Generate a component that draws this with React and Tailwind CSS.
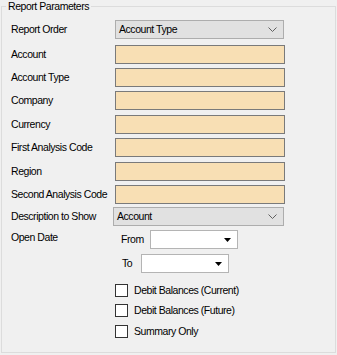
import React from 'react';

const Chevron = () => (
  <svg width="9" height="5" viewBox="0 0 9 5" className="block">
    <path d="M0.5 0.5 L4.5 4.5 L8.5 0.5" stroke="#606060" strokeWidth="1" fill="none" />
  </svg>
);

const Caret = () => (
  <svg width="7" height="4" viewBox="0 0 7 4" className="block">
    <path d="M0 0 H7 L3.5 4 Z" fill="#000" />
  </svg>
);

const Combo = ({ value, className = '' }) => (
  <div className={`h-[19px] border border-[#adadad] bg-[#e1e1e1] flex items-center justify-between pl-[3px] pr-[6px] ${className}`}>
    <span className="leading-none">{value}</span>
    <Chevron />
  </div>
);

const Field = () => (
  <div className="h-[19px] w-[170px] border border-[#7a7a7a] bg-[#f8dfb4]" />
);

const DateBox = ({ className = '' }) => (
  <div className={`h-[19px] w-[88px] border border-[#b4b4b4] bg-white flex items-center justify-end pr-[6px] ${className}`}>
    <Caret />
  </div>
);

const Row = ({ label, mt, children }) => (
  <div className={`flex items-center ${mt}`}>
    <div className="w-[113px] pl-[9px] whitespace-nowrap">{label}</div>
    {children}
  </div>
);

const Check = ({ label, mt }) => (
  <label className={`flex items-center leading-[13px] ${mt}`}>
    <span className="w-[13px] h-[13px] border border-[#333] bg-white" />
    <span className="ml-[6px] whitespace-nowrap">{label}</span>
  </label>
);

export default function App() {
  const fields = [
    ['Account', 'mt-[6px]'],
    ['Account Type', 'mt-[4px]'],
    ['Company', 'mt-[4px]'],
    ['Currency', 'mt-[5px]'],
    ['First Analysis Code', 'mt-[4px]'],
    ['Region', 'mt-[5px]'],
    ['Second Analysis Code', 'mt-[4px]'],
  ];

  return (
    <div className="w-[337px] h-[355px] bg-[#f0f0f0] pl-[1px] text-[10.5px] tracking-[-0.45px] text-black font-['Liberation_Sans',Arial,sans-serif]">
      <fieldset className="w-[335px] h-[353px] border border-[#dcdcdc]">
        <legend className="ml-[4px] px-[2px] leading-[13px]">Report Parameters</legend>
        <div className="flex flex-col pt-[7px]">
          <Row label="Report Order" mt="">
            <Combo value="Account Type" className="w-[169px]" />
          </Row>
          {fields.map(([label, mt]) => (
            <Row key={label} label={label} mt={mt}>
              <Field />
            </Row>
          ))}
          <div className="flex items-center mt-[3px]">
            <div className="w-[111px] pl-[9px] whitespace-nowrap">Description to Show</div>
            <Combo value="Account" className="w-[171px]" />
          </div>
          <div className="flex mt-[4px]">
            <div className="w-[113px] pl-[9px] leading-[14px]">Open Date</div>
            <div className="flex flex-col">
              <div className="flex items-center">
                <span className="w-[35px] pl-[6px]">From</span>
                <DateBox />
              </div>
              <div className="flex items-center mt-[5px]">
                <span className="w-[26px] pl-[7px]">To</span>
                <DateBox />
              </div>
              <Check label="Debit Balances (Current)" mt="mt-[11px]" />
              <Check label="Debit Balances (Future)" mt="mt-[7px]" />
              <Check label="Summary Only" mt="mt-[8px]" />
            </div>
          </div>
        </div>
      </fieldset>
    </div>
  );
}
